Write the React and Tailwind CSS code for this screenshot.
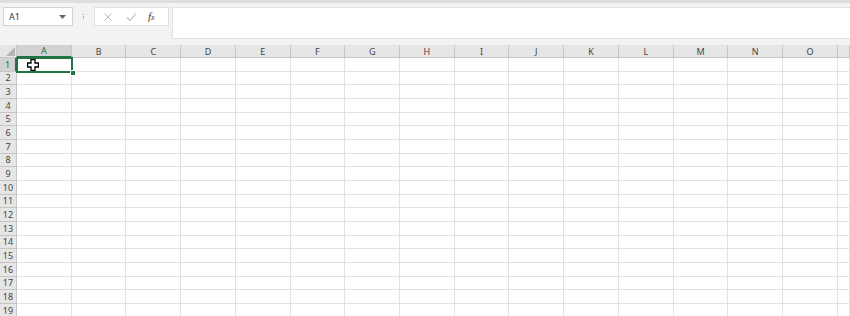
import React from "react";

const COLS = ["A","B","C","D","E","F","G","H","I","J","K","L","M","N","O",""];
const ROWS = Array.from({ length: 19 }, (_, i) => i + 1);

export default function App() {
  const font = { fontFamily: '"Noto Sans", "Open Sans", "Liberation Sans", sans-serif' };
  return (
    <div className="w-[850px] h-[316px] overflow-hidden bg-[#f3f3f3] flex flex-col" style={font}>
      <div className="h-[3px] bg-[#dedede] shrink-0" />
      {/* formula bar */}
      <div className="flex items-start h-[42px] shrink-0 pt-[4px]">
        <div className="ml-[3px] w-[70px] h-[19px] bg-white border border-[#d4d4d4] flex items-center justify-between px-[5px]">
          <span className="text-[9px] text-[#333] leading-none">A1</span>
          <svg width="7" height="4" viewBox="0 0 7 4" className="mr-[1px]"><path d="M0 0 L7 0 L3.5 4 Z" fill="#666" /></svg>
        </div>
        <div className="w-[21px] h-[19px] flex flex-col items-center justify-center gap-[1px]">
          <div className="w-[1px] h-[1px] bg-[#999]" />
          <div className="w-[1px] h-[1px] bg-[#999]" />
          <div className="w-[1px] h-[1px] bg-[#999]" />
        </div>
        <div className="w-[75px] h-[19px] bg-white border border-[#e0e0e0] flex items-center">
          <svg width="10" height="10" viewBox="0 0 10 10" className="ml-[8px]"><path d="M1.5 1.5 L8.5 8.5 M8.5 1.5 L1.5 8.5" stroke="#bdbdbd" strokeWidth="1" /></svg>
          <svg width="11" height="10" viewBox="0 0 11 10" className="ml-[13px]"><path d="M1 5.5 L4 8.5 L10 1.5" stroke="#bdbdbd" strokeWidth="1.1" fill="none" /></svg>
          <span className="ml-[11px] text-[11px] italic text-[#444] leading-none" style={{ fontFamily: '"Liberation Serif", serif' }}>f<span className="text-[8px]">x</span></span>
        </div>
        <div className="ml-[3px] flex-1 h-[32px] bg-white border border-[#e2e2e2] border-r-0" />
      </div>
      {/* grid */}
      <div className="relative flex-1 bg-white">
        <div
          className="grid"
          style={{
            gridTemplateColumns: "17px repeat(15, 54.73px) 12px",
            gridTemplateRows: "13px repeat(19, 13.67px)",
          }}
        >
          {/* header row */}
          <div className="bg-[#e6e6e6] border-r border-b border-[#c6c6c6] flex items-end justify-end p-[1px]">
            <svg width="9" height="9" viewBox="0 0 9 9"><path d="M9 0 L9 9 L0 9 Z" fill="#b5b5b5" /></svg>
          </div>
          {COLS.map((c, i) =>
            i === 0 ? (
              <div key={c} className="bg-[#d2d2d2] border-r border-[#c6c6c6] border-b-2 border-b-[#217346] flex items-center justify-center text-[9px] text-[#217346] leading-none">
                {c}
              </div>
            ) : (
              <div key={"h" + i} className="bg-[#e6e6e6] border-r border-b border-[#c6c6c6] flex items-center justify-center text-[9px] text-[#444] leading-none">
                {c}
              </div>
            )
          )}
          {ROWS.map((r) => (
            <React.Fragment key={r}>
              <div
                className={
                  r === 1
                    ? "bg-[#d2d2d2] border-r-2 border-r-[#217346] border-b border-b-[#c6c6c6] flex items-center justify-center text-[9px] text-[#217346] leading-none"
                    : "bg-[#e6e6e6] border-r border-b border-[#c6c6c6] flex items-center justify-center text-[9px] text-[#444] leading-none"
                }
              >
                {r}
              </div>
              {COLS.map((c, i) => (
                <div key={r + "-" + i} className="border-r border-b border-[#e1e1e1]" />
              ))}
            </React.Fragment>
          ))}
        </div>
        {/* selection */}
        <div className="absolute left-[16px] top-[12px] w-[57px] h-[15.5px] border-2 border-[#217346]" />
        <div className="absolute left-[70px] top-[25px] w-[4px] h-[4px] bg-[#217346] border border-white box-content" />
        {/* cursor */}
        <svg className="absolute left-[27px] top-[14px]" width="12" height="12" viewBox="0 0 12 12">
          <path d="M4 0.5 H8 V4 H11.5 V8 H8 V11.5 H4 V8 H0.5 V4 H4 Z" fill="white" stroke="black" strokeWidth="1.3" />
        </svg>
      </div>
    </div>
  );
}
